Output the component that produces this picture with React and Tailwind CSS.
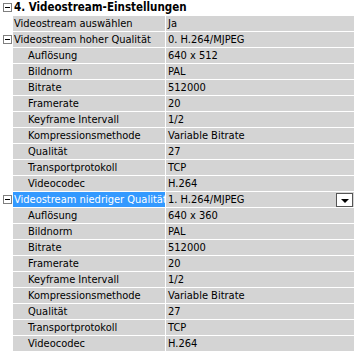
import React from "react";

const subRows = (res) => [
  ["Auflösung", res],
  ["Bildnorm", "PAL"],
  ["Bitrate", "512000"],
  ["Framerate", "20"],
  ["Keyframe Intervall", "1/2"],
  ["Kompressionsmethode", "Variable Bitrate"],
  ["Qualität", "27"],
  ["Transportprotokoll", "TCP"],
  ["Videocodec", "H.264"],
];

const MinusBox = () => (
  <div className="w-[9px] h-[9px] border border-[#7f7f7f] bg-white flex items-center justify-center">
    <div className="w-[5px] h-px bg-black" />
  </div>
);

const Row = ({ label, value, indent, toggle, selected, dropdown }) => (
  <div className="flex h-[15px] mt-px">
    <div className="w-[13px] flex items-center justify-center pl-[1px]">
      {toggle && <MinusBox />}
    </div>
    <div
      className={
        "w-[152px] flex items-center overflow-hidden whitespace-nowrap " +
        (selected ? "bg-[#3399ff] text-white" : "bg-[#d4d4d4]") +
        (indent ? " pl-[15px]" : " pl-[1px]")
      }
    >
      {label}
    </div>
    <div className="w-px" />
    <div className="flex-1 bg-[#d4d4d4] flex items-center pl-[2px] whitespace-nowrap">
      <span className="flex-1">{value}</span>
      {dropdown && (
        <div className="w-[17px] h-[14px] mr-[1px] bg-white border border-[#555] flex items-center justify-center">
          <div className="w-0 h-0 border-l-[4px] border-r-[4px] border-t-[4px] border-l-transparent border-r-transparent border-t-black mt-[2px]" />
        </div>
      )}
    </div>
    <div className="w-[2px]" />
  </div>
);

export default function App() {
  return (
    <div
      className="w-[356px] h-[351px] bg-white text-black text-[11px] leading-none overflow-hidden"
      style={{ fontFamily: '"DejaVu Sans Condensed", "Liberation Sans", sans-serif' }}
    >
      <div className="flex h-[15px] items-center">
        <div className="w-[13px] flex items-center justify-center pl-[1px]">
          <MinusBox />
        </div>
        <div className="font-bold pl-[1px] text-[11.5px]">4. Videostream-Einstellungen</div>
      </div>
      <Row label="Videostream auswählen" value="Ja" />
      <Row label="Videostream hoher Qualität" value="0. H.264/MJPEG" toggle />
      {subRows("640 x 512").map(([l, v]) => (
        <Row key={"a" + l} label={l} value={v} indent />
      ))}
      <Row
        label="Videostream niedriger Qualität"
        value="1. H.264/MJPEG"
        toggle
        selected
        dropdown
      />
      {subRows("640 x 360").map(([l, v]) => (
        <Row key={"b" + l} label={l} value={v} indent />
      ))}
    </div>
  );
}
